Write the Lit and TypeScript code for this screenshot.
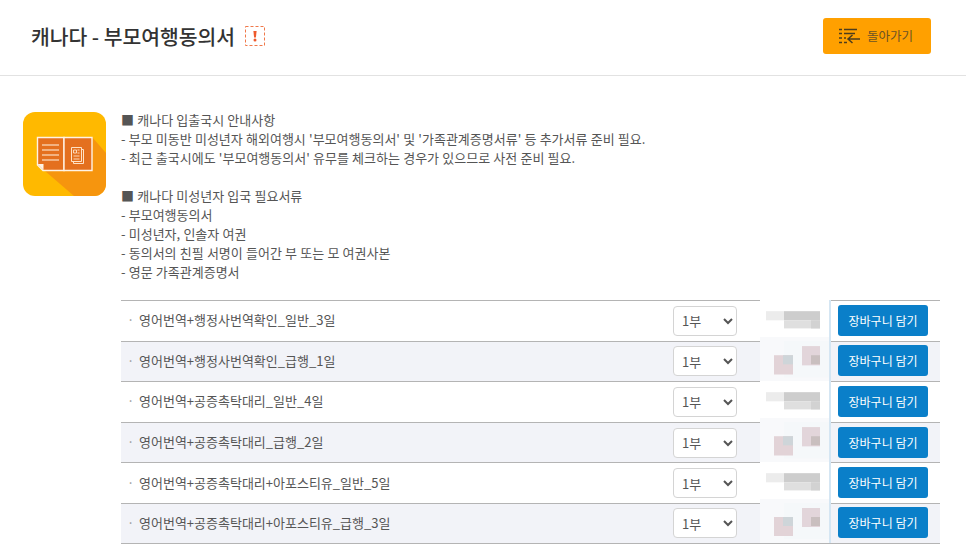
import { LitElement, html, css, svg } from "lit";
import { customElement } from "lit/decorators.js";

const ROWS = [
  "영어번역+행정사번역확인_일반_3일",
  "영어번역+행정사번역확인_급행_1일",
  "영어번역+공증촉탁대리_일반_4일",
  "영어번역+공증촉탁대리_급행_2일",
  "영어번역+공증촉탁대리+아포스티유_일반_5일",
  "영어번역+공증촉탁대리+아포스티유_급행_3일",
];

// blurred price patches, [x, y, w, h, colour] in a 69x40 cell
const PATCH_A = [
  [6, 11, 18, 9, "#ececec"],
  [24, 11, 36, 9, "#cdcdcd"],
  [24, 20, 36, 8, "#dfdfdf"],
  [51, 20, 9, 8, "#d2d2d2"],
];
const PATCH_B = [
  [0, -4, 69, 44, "#f8f9fb"],
  [24, 0, 45, 36, "#f5f8fa"],
  [14, 14, 19, 19, "#e2d3d7"],
  [42, 5, 18, 19, "#e2d5da"],
  [51, 14, 9, 9, "#c9bfbf"],
  [23, 14, 10, 9, "#ced5d9"],
];

@customElement("app-root")
export class AppRoot extends LitElement {
  static styles = css`
    :host {
      display: block;
      height: 559px;
      overflow: hidden;
      background: #fff;
      font-family: "Noto Sans CJK KR", "Noto Sans", sans-serif;
      color: #555;
    }
    .head {
      display: flex;
      align-items: center;
      justify-content: space-between;
      height: 76px;
      padding: 0 35px 4px 31px;
      box-sizing: border-box;
      border-bottom: 1px solid #e2e2e2;
    }
    .title {
      display: flex;
      align-items: center;
      gap: 10px;
      margin: 0;
      font-size: 20.4px;
      font-weight: 500;
      color: #333;
    }
    .back {
      display: flex;
      align-items: center;
      gap: 7px;
      width: 108px;
      height: 36px;
      padding: 0 0 0 16px;
      box-sizing: border-box;
      border: 0;
      border-radius: 3px;
      background: #ffa000;
      color: #6b5326;
      font: inherit;
      font-size: 12.5px;
    }
    .body {
      display: flex;
      padding: 36px 26px 0 23px;
    }
    .logo {
      flex: none;
      width: 83px;
      height: 84px;
      margin-right: 15px;
    }
    .main {
      flex: 1;
    }
    .notes {
      margin: -2px 0 19px;
      font-size: 13px;
      line-height: 19px;
      word-spacing: 0.3px;
      white-space: pre-line;
    }
    .row {
      display: grid;
      grid-template-columns: 552px 87px 69px 1fr;
      align-items: center;
      height: 40.6px;
      box-sizing: border-box;
      border-top: 1px solid #b4b4b4;
      font-size: 13px;
    }
    .row:nth-child(even) {
      background: #f2f3f8;
    }
    .row:last-child {
      height: 41px;
      border-bottom: 1px solid #b4b4b4;
    }
    .name {
      padding: 0 0 2px 6px;
    }
    .name::before {
      content: "·";
      display: inline-block;
      width: 12px;
      color: #999;
    }
    select {
      width: 64px;
      height: 30px;
      padding: 0 0 0 4px;
      border: 1px solid #d4d4d4;
      border-radius: 4px;
      background: #fff;
      color: #555;
      font: inherit;
      font-size: 13px;
    }
    .price {
      align-self: stretch;
      margin-top: -1px;
      height: calc(100% + 1px);
      background: #fff;
    }
    .price svg {
      display: block;
      width: 69px;
      height: 100%;
      overflow: visible;
    }
    .buy {
      align-self: stretch;
      display: flex;
      align-items: center;
      padding-left: 7px;
      border-left: 2px solid #d5e6f3;
      margin-top: -1px;
      height: calc(100% + 1px);
      box-sizing: border-box;
    }
    .buy button {
      width: 90px;
      height: 31px;
      border: 0;
      border-radius: 3px;
      background: #0a7fc9;
      color: #fff;
      font: inherit;
      font-size: 12px;
    }
  `;

  private renderAlert() {
    return html`<svg width="20" height="20" viewBox="0 0 20 20">
      <rect x=".5" y=".5" width="19" height="19" fill="none" stroke="#f0794a" stroke-dasharray="3 2" />
      <path d="M8.400 5h3.200l-.7 6.500H9.100z" fill="#ee5a2c" />
      <circle cx="10" cy="14" r="1.500" fill="#ee5a2c" />
    </svg>`;
  }

  private renderBackIcon() {
    return html`<svg width="21" height="16" viewBox="0 0 21 16" stroke="#4d3d1e" fill="none" stroke-width="1.300">
      <path d="M0 1.500h3M5 1.500h13M0 5.500h3M5 5.500h11M0 10h3M5 10h2M0 14.500h3M5 14.500h3" />
      <path d="M9 11h12M13.500 7L9 11l4.500 4" stroke-width="1.500" />
    </svg>`;
  }

  private renderLogo() {
    return html`<svg class="logo" viewBox="0 0 83 84">
      <defs><clipPath id="c"><rect width="83" height="84" rx="12" /></clipPath></defs>
      <g clip-path="url(#c)">
        <rect width="83" height="84" fill="#ffb900" />
        <path d="M69 25L83 41V84H51L22 59z" fill="#f6950e" />
      </g>
      <path d="M14.500 25.500H41v33H20l-5.500-5.500z" fill="#e4701f" stroke="#fff3e4" stroke-width="1.400" />
      <path d="M41 25.500h28v33H41z" fill="#e4701f" stroke="#fff3e4" stroke-width="1.400" />
      <path d="M14.500 52h6v6z" fill="#fff3e4" />
      <path d="M19 33h17M19 38h17M19 43h17M19 48h17" stroke="#fff3e4" stroke-width="1.200" />
      <path d="M48.500 35.500h10v14h-10z" fill="#e4701f" stroke="#ffe2c7" />
      <path d="M58.500 37.500h2v14h-10v-2" fill="none" stroke="#ffe2c7" />
      <path d="M50.500 38h3v3h-3zM50.500 44h6M50.500 47h6M54.500 38h2M54.500 41h2" fill="none" stroke="#ffe2c7" stroke-width=".9" />
    </svg>`;
  }

  private renderPatch(i: number) {
    const rects = i % 2 ? PATCH_B : PATCH_A;
    return html`<svg viewBox="0 0 69 40" preserveAspectRatio="none">
      ${rects.map(([x, y, w, h, c]) => svg`<rect x=${x} y=${y} width=${w} height=${h} fill=${c} />`)}
    </svg>`;
  }

  render() {
    return html`
      <header class="head">
        <h1 class="title">캐나다 - 부모여행동의서 ${this.renderAlert()}</h1>
        <button class="back">${this.renderBackIcon()}돌아가기</button>
      </header>
      <div class="body">
        ${this.renderLogo()}
        <div class="main">
          <p class="notes">■ 캐나다 입출국시 안내사항
- 부모 미동반 미성년자 해외여행시 '부모여행동의서' 및 '가족관계증명서류' 등 추가서류 준비 필요.
- 최근 출국시에도 '부모여행동의서' 유무를 체크하는 경우가 있으므로 사전 준비 필요.

■ 캐나다 미성년자 입국 필요서류
- 부모여행동의서
- 미성년자, 인솔자 여권
- 동의서의 친필 서명이 들어간 부 또는 모 여권사본
- 영문 가족관계증명서</p>
          <div class="table">
            ${ROWS.map(
              (name, i) => html`<div class="row">
                <div class="name">${name}</div>
                <select><option>1부</option></select>
                <div class="price">${this.renderPatch(i)}</div>
                <div class="buy"><button>장바구니 담기</button></div>
              </div>`,
            )}
          </div>
        </div>
      </div>
    `;
  }
}
